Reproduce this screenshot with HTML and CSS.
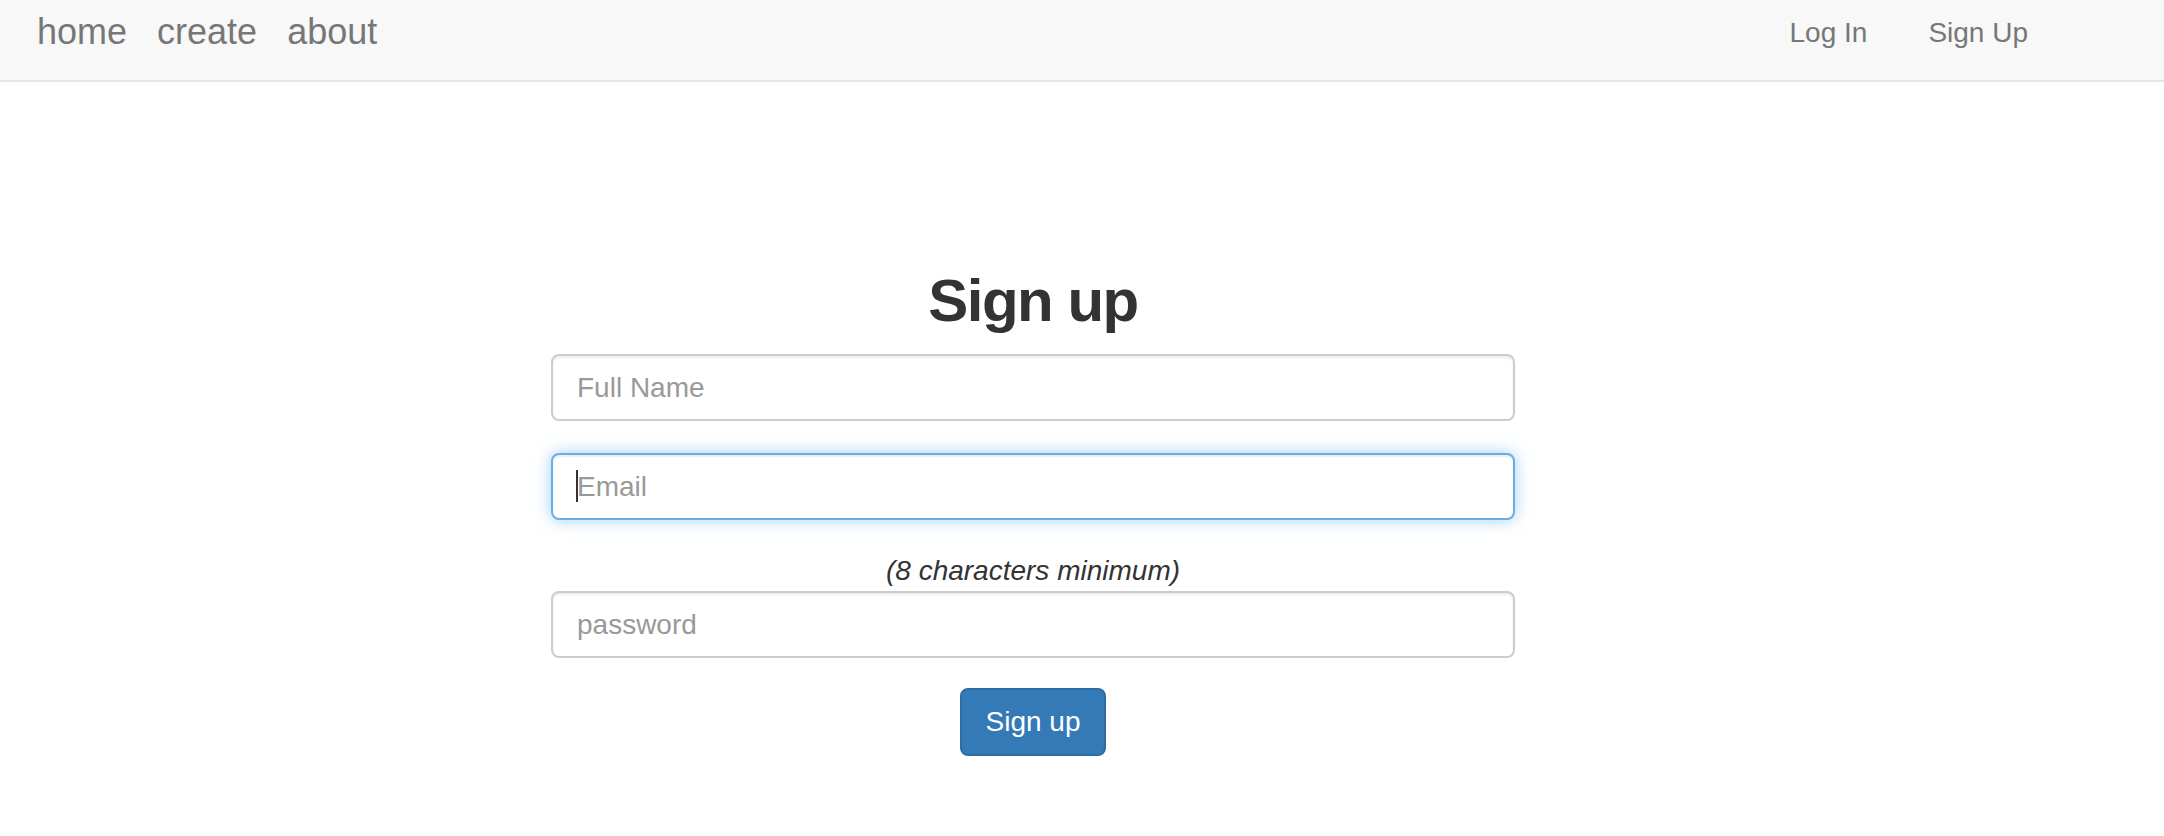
FILE: index.html
```html
<!DOCTYPE html>
<html lang="en">
<head>
<meta charset="utf-8">
<title>Sign up</title>
<link rel="stylesheet" href="styles.css">
</head>
<body>
<nav class="navbar">
  <div class="nav-left">
    <a class="brand" href="#">home</a>
    <a class="brand" href="#">create</a>
    <a class="brand" href="#">about</a>
  </div>
  <div class="nav-right">
    <a class="nav-link" href="#">Log In</a>
    <a class="nav-link" href="#">Sign Up</a>
  </div>
</nav>
<main class="main">
  <form class="signup">
    <h2 class="title">Sign up</h2>
    <div class="group">
      <input class="field" type="text" placeholder="Full Name">
    </div>
    <div class="group group-email">
      <div class="field-wrap">
        <input class="field field-focus" type="email" placeholder="Email">
        <span class="caret"></span>
      </div>
    </div>
    <p class="hint">(8 characters minimum)</p>
    <div class="group">
      <input class="field" type="password" placeholder="password">
    </div>
    <div class="actions">
      <button class="btn" type="button">Sign up</button>
    </div>
  </form>
</main>
</body>
</html>
```
FILE: styles.css
```css
html, body {
  margin: 0;
  padding: 0;
  background: #fff;
  font-family: "Liberation Sans", Arial, Helvetica, sans-serif;
  color: #333;
}

.navbar {
  display: flex;
  justify-content: space-between;
  align-items: flex-start;
  height: 80px;
  background: #f8f8f8;
  border-bottom: 2px solid #e7e7e7;
}

.nav-left {
  display: flex;
  gap: 30px;
  padding-left: 37px;
  padding-top: 12px;
}

.brand {
  font-size: 36px;
  line-height: 40px;
  color: #777;
  text-decoration: none;
}

.nav-right {
  display: flex;
  gap: 61px;
  padding-right: 136px;
  padding-top: 13px;
}

.nav-link {
  font-size: 28px;
  line-height: 40px;
  color: #777;
  text-decoration: none;
}

.main {
  padding-top: 186px;
}

.signup {
  margin-left: 551px;
  width: 964px;
}

.title {
  margin: 0 0 20px;
  font-size: 60px;
  line-height: 66px;
  font-weight: bold;
  letter-spacing: -1.5px;
  text-align: center;
  color: #333;
}

.group {
  margin-bottom: 32px;
}

.group-email {
  margin-bottom: 31px;
}

.field-wrap {
  position: relative;
}

.field {
  display: block;
  width: 100%;
  box-sizing: border-box;
  height: 67px;
  padding: 12px 24px;
  font-family: "Liberation Sans", Arial, Helvetica, sans-serif;
  font-size: 28px;
  line-height: 40px;
  color: #555;
  background: #fff;
  border: 2px solid #ccc;
  border-radius: 8px;
  box-shadow: inset 0 2px 2px rgba(0, 0, 0, 0.075);
  outline: none;
}

.field::placeholder {
  color: #999;
  opacity: 1;
}

.field-focus {
  border-color: #66afe9;
  box-shadow: inset 0 2px 2px rgba(0, 0, 0, 0.075), 0 0 16px rgba(102, 175, 233, 0.6);
}

.caret {
  position: absolute;
  left: 25px;
  top: 17px;
  width: 2px;
  height: 32px;
  background: #333;
}

.hint {
  margin: 0;
  font-size: 28px;
  line-height: 40px;
  font-style: italic;
  text-align: center;
  color: #333;
}

.group + .actions {
  margin-top: -2px;
}

.actions {
  text-align: center;
}

.btn {
  display: inline-block;
  padding: 12px 24px;
  font-family: "Liberation Sans", Arial, Helvetica, sans-serif;
  font-size: 28px;
  line-height: 40px;
  color: #fff;
  background: #337ab7;
  border: 2px solid #2e6da4;
  border-radius: 8px;
  cursor: pointer;
}
```
